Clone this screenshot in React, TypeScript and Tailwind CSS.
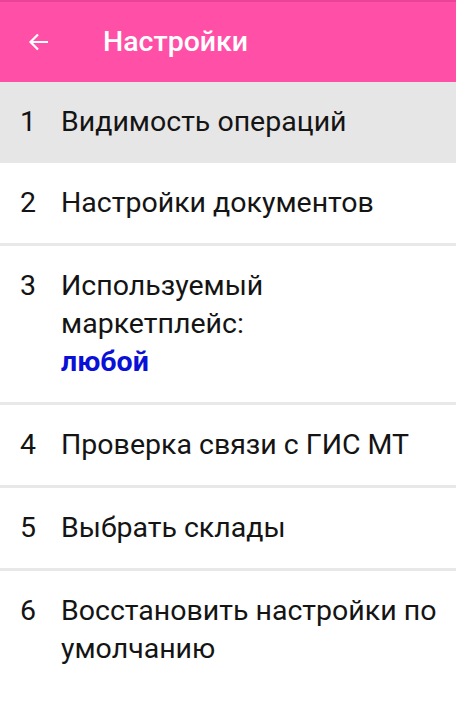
const items: { n: number; title: string; value?: string }[] = [
  { n: 1, title: 'Видимость операций' },
  { n: 2, title: 'Настройки документов' },
  { n: 3, title: 'Используемый маркетплейс:', value: 'любой' },
  { n: 4, title: 'Проверка связи с ГИС МТ' },
  { n: 5, title: 'Выбрать склады' },
  { n: 6, title: 'Восстановить настройки по умолчанию' },
];

export default function App() {
  return (
    <div className="w-[456px] h-[704px] bg-white overflow-hidden font-['Roboto',sans-serif]">
      <header className="h-[82px] bg-[#ff4fa6] border-t-2 border-[#e9449a] flex items-center">
        <svg className="ml-[27px] w-[24px] h-[24px]" viewBox="0 0 24 24" fill="none" stroke="white" strokeWidth="2.2">
          <path d="M21 12H4M11 4.5L3.5 12 11 19.5" />
        </svg>
        <h1 className="ml-[52px] text-white text-[28.5px] font-medium">Настройки</h1>
      </header>

      <ul>
        {items.map((it, i) => (
          <li
            key={it.n}
            className={
              'flex pl-[20px] pr-[4px] pt-[21px] text-[28.5px] leading-[38px] text-[#141414] ' +
              (i === 0 ? 'bg-[#e6e6e6] pb-[22px]' : 'pb-[21px]') +
              (i > 0 && i < items.length - 1 ? ' border-b-[3px] border-[#e8e8e8]' : '')
            }
          >
            <span className="w-[41px] shrink-0">{it.n}</span>
            <div className="min-w-0 flex-1">
              <div className={it.value ? 'w-[300px]' : ''}>{it.title}</div>
              {it.value && <div className="text-[#0a10d6] font-bold">{it.value}</div>}
            </div>
          </li>
        ))}
      </ul>
    </div>
  );
}
